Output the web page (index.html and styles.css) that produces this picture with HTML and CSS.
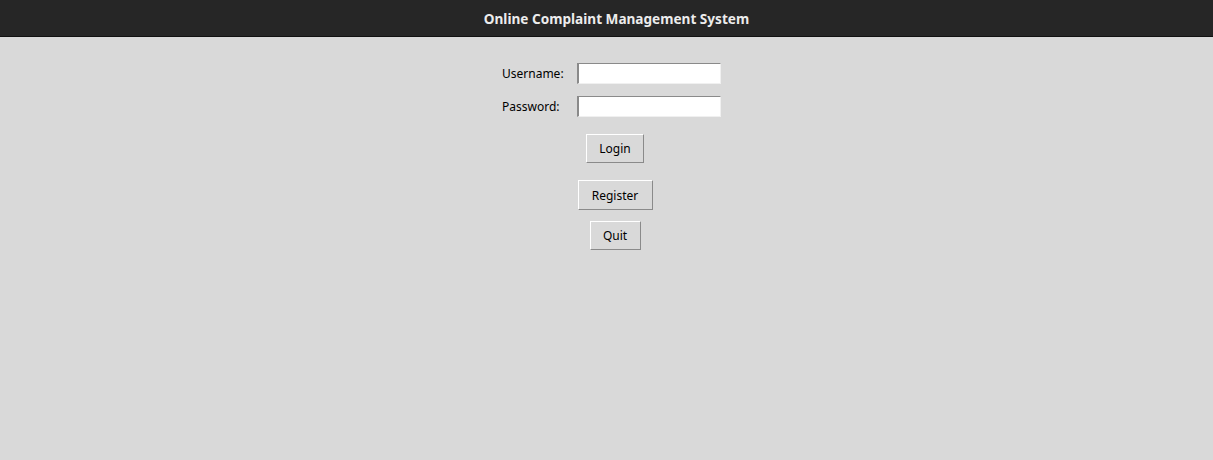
FILE: index.html
```html
<!DOCTYPE html>
<html>
<head>
<meta charset="utf-8">
<link rel="stylesheet" href="styles.css">
</head>
<body>
<header class="topbar"><span class="title">Online Complaint Management System</span></header>
<main class="content">
  <div class="form">
    <label class="lbl" for="u">Username:</label>
    <input class="entry" id="u" type="text">
    <label class="lbl" for="p">Password:</label>
    <input class="entry" id="p" type="password">
  </div>
  <div class="buttons">
    <button class="btn btn-login">Login</button>
    <button class="btn btn-register">Register</button>
    <button class="btn btn-quit">Quit</button>
  </div>
</main>
</body>
</html>
```
FILE: styles.css
```css
html, body {
  margin: 0;
  padding: 0;
  background: #d9d9d9;
  font-family: "Noto Sans", "Open Sans", sans-serif;
  height: 100%;
}
.topbar {
  height: 36px;
  background: #262626;
  border-bottom: 1px solid #111;
  display: flex;
  align-items: center;
  justify-content: center;
  padding-left: 20px;
}
.title {
  color: #ececec;
  font-weight: bold;
  font-size: 13.6px;
}
.content {
  display: flex;
  flex-direction: column;
  align-items: center;
}
.form {
  margin-top: 26px;
  margin-left: 10px;
  display: grid;
  grid-template-columns: 75px 144px;
  row-gap: 12px;
  align-items: center;
}
.lbl {
  font-size: 12px;
  color: #000;
}
.entry {
  box-sizing: border-box;
  width: 144px;
  height: 21px;
  margin: 0;
  padding: 0 2px;
  background: #fff;
  border-top: 1px solid #8a8a8a;
  border-left: 2px solid #8a8a8a;
  border-right: 1px solid #f0f0f0;
  border-bottom: 1px solid #f0f0f0;
  outline: none;
  font-family: inherit;
  font-size: 12px;
}
.buttons {
  margin-left: 17px;
  display: flex;
  flex-direction: column;
  align-items: center;
}
.btn {
  box-sizing: border-box;
  background: #d9d9d9;
  border-top: 1px solid #ffffff;
  border-left: 1px solid #ffffff;
  border-right: 1px solid #8a8a8a;
  border-bottom: 1px solid #8a8a8a;
  font-family: inherit;
  font-size: 12px;
  color: #000;
  height: 29px;
  padding: 0;
  margin: 0;
}
.btn-login { width: 58px; margin-top: 17px; }
.btn-register { width: 75px; height: 30px; margin-top: 17px; }
.btn-quit { width: 51px; margin-top: 11px; }
```
